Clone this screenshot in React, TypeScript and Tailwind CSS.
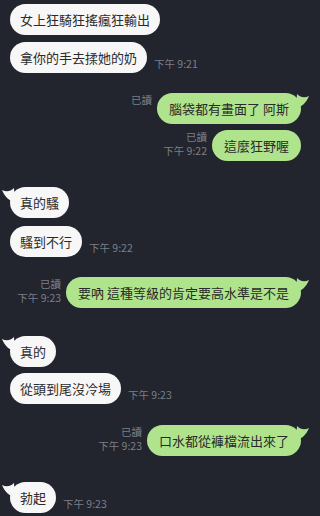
import React from "react";

type Msg = {
  side: "left" | "right";
  text: string;
  tail?: boolean;
  time?: string;
  read?: boolean;
  mt: string;
};

const messages: Msg[] = [
  { side: "left", text: "女上狂騎狂搖瘋狂輸出", mt: "mt-0" },
  { side: "left", text: "拿你的手去揉她的奶", time: "下午 9:21", mt: "mt-[7px]" },
  { side: "right", text: "腦袋都有畫面了 阿斯", tail: true, read: true, mt: "mt-[20px]" },
  { side: "right", text: "這麼狂野喔", read: true, time: "下午 9:22", mt: "mt-[6px]" },
  { side: "left", text: "真的騷", tail: true, mt: "mt-[26px]" },
  { side: "left", text: "騷到不行", time: "下午 9:22", mt: "mt-[8px]" },
  { side: "right", text: "要吶 這種等級的肯定要高水準是不是", tail: true, read: true, time: "下午 9:23", mt: "mt-[20px]" },
  { side: "left", text: "真的", tail: true, mt: "mt-[28px]" },
  { side: "left", text: "從頭到尾沒冷場", time: "下午 9:23", mt: "mt-[6px]" },
  { side: "right", text: "口水都從褲檔流出來了", tail: true, read: true, time: "下午 9:23", mt: "mt-[21px]" },
  { side: "left", text: "勃起", tail: true, time: "下午 9:23", mt: "mt-[26px]" },
];

function LeftTail() {
  return (
    <svg className="absolute left-[-8px] top-[1px]" width="14" height="15" viewBox="0 0 14 15">
      <path d="M0 2 C4 4 8 4 12 0 L13 14 C7 13 3 9 0 2 Z" fill="#f7f7f7" />
    </svg>
  );
}

function RightTail() {
  return (
    <svg className="absolute right-[-8px] top-[1px]" width="14" height="15" viewBox="0 0 14 15">
      <path d="M14 2 C10 4 6 4 2 0 L1 14 C7 13 11 9 14 2 Z" fill="#afe48d" />
    </svg>
  );
}

function Bubble({ m }: { m: Msg }) {
  const left = m.side === "left";
  return (
    <div
      className={`relative rounded-[16px] py-[7px] text-[13px] leading-[17px] whitespace-nowrap text-[#2a2a2a] ${
        left ? "bg-[#f7f7f7] px-[10px]" : "bg-[#afe48d] px-[12px]"
      }`}
    >
      {m.tail && (left ? <LeftTail /> : <RightTail />)}
      <span className="relative">{m.text}</span>
    </div>
  );
}

export default function App() {
  return (
    <div
      className="w-[320px] h-[516px] overflow-hidden bg-[#22252d] pt-[4px]"
      style={{ fontFamily: '"Noto Sans CJK TC", "Noto Sans", sans-serif' }}
    >
      <div className="flex flex-col">
        {messages.map((m, i) =>
          m.side === "left" ? (
            <div key={i} className={`flex items-end gap-[7px] pl-[10px] ${m.mt}`}>
              <Bubble m={m} />
              {m.time && (
                <span className="pb-[2px] text-[10.5px] leading-[14px] text-[#7b7f88]">{m.time}</span>
              )}
            </div>
          ) : (
            <div key={i} className={`flex items-end justify-end gap-[5px] pr-[19px] ${m.mt}`}>
              <div className="flex flex-col items-end pb-[3px] text-[10.5px] leading-[14px] text-[#7b7f88]">
                {m.read && <span>已讀</span>}
                <span>{m.time ?? "\u00a0"}</span>
              </div>
              <Bubble m={m} />
            </div>
          )
        )}
      </div>
    </div>
  );
}
